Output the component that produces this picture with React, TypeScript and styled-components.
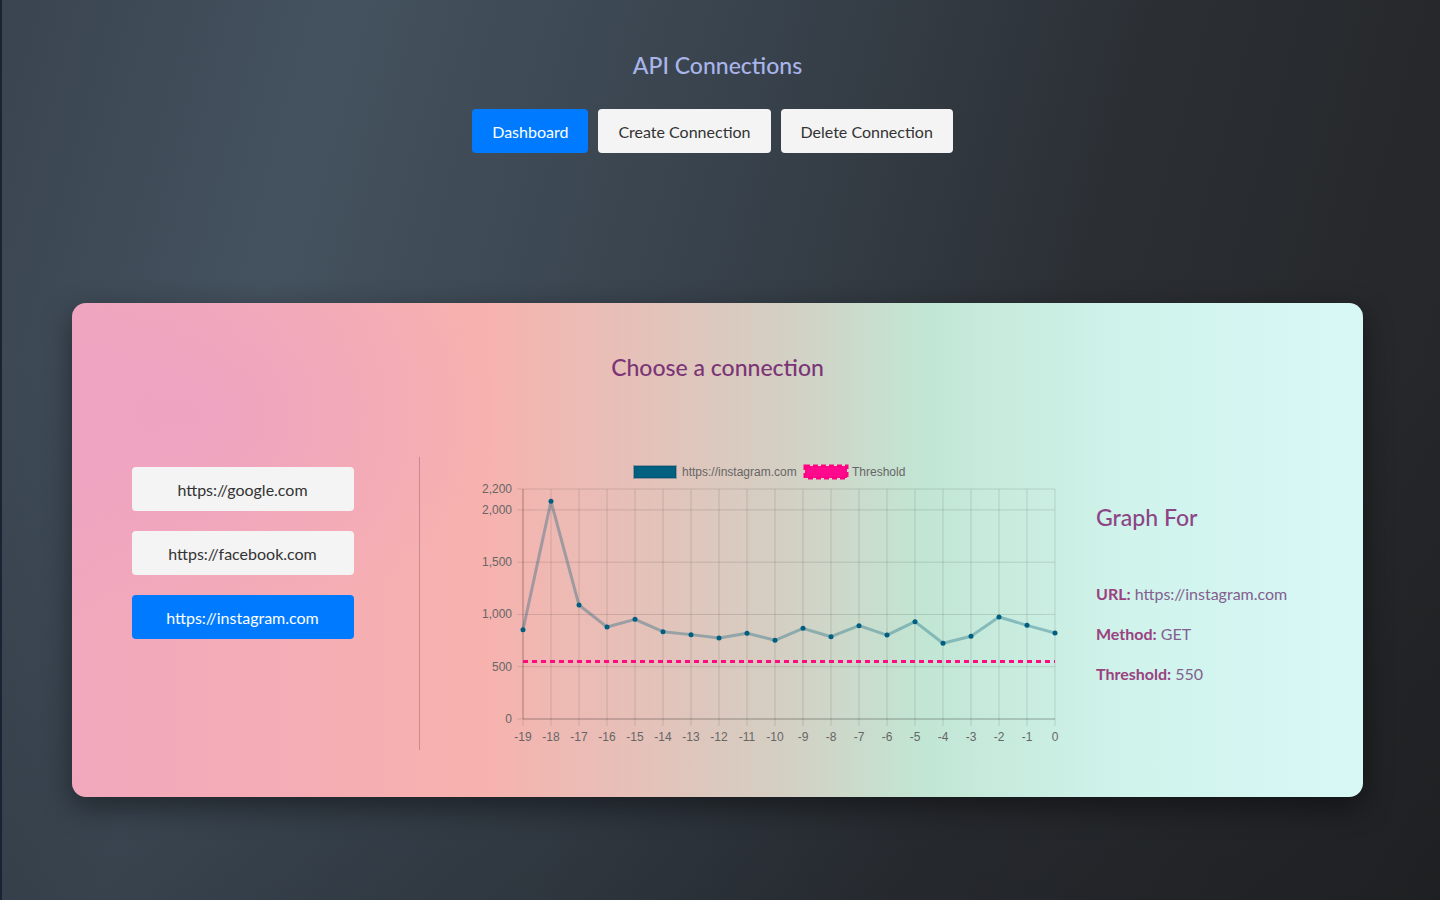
import styled, { createGlobalStyle } from 'styled-components';

const GlobalStyle = createGlobalStyle`
  html {
    overflow-y: scroll;
  }
  html::-webkit-scrollbar {
    width: 5px;
  }
  html::-webkit-scrollbar-track {
    background: #26282c;
  }
  html::-webkit-scrollbar-thumb {
    background: #e3a3a6;
  }
  body {
    margin: 0;
    font-family: Lato, "Open Sans", sans-serif;
    background: #26282b;
  }
`;

const Page = styled.div`
  min-height: 1006px;
  box-sizing: border-box;
  padding: 50px 77px 200px 70px;
  background:
    linear-gradient(180deg, rgba(0, 0, 0, 0) 35%, rgba(18, 20, 24, 0.3) 100%),
    linear-gradient(105deg, #3a4450 0%, #44525f 20%, #38424c 45%, #2b2f34 68%, #222324 100%);
  border-left: 2px solid #1b2233;
`;

const Title = styled.h1`
  margin: 0;
  text-align: center;
  font-size: 23px;
  line-height: 30px;
  font-weight: 500;
  color: #a9b5ea;
`;

const Nav = styled.nav`
  display: flex;
  justify-content: center;
  margin-top: 29px;
`;

const Button = styled.button<{ $active?: boolean }>`
  height: 44px;
  padding: 0 20px;
  border: none;
  border-radius: 4px;
  font-family: inherit;
  font-size: 16px;
  cursor: pointer;
  background: ${(p) => (p.$active ? '#007bff' : '#f4f4f4')};
  color: ${(p) => (p.$active ? '#ffffff' : '#333333')};
`;

const NavButton = styled(Button)`
  margin-right: 10px;
`;

const Card = styled.section`
  margin-top: 150px;
  padding: 49px 0 50px;
  border-radius: 14px;
  background:
    radial-gradient(ellipse 320px 220px at 110px 110px, rgba(234, 156, 200, 0.55), transparent),
    linear-gradient(90deg, #f1a8bd 0%, #f7b2ae 32%, #d4cfc3 55%, #c2e6d4 66%, #d0f3ec 82%, #d8f8f6 100%);
  box-shadow: 0 10px 30px rgba(0, 0, 0, 0.45);
`;

const CardTitle = styled.h2`
  margin: 0;
  text-align: center;
  font-size: 23px;
  line-height: 30px;
  font-weight: 500;
  color: #7b3577;
`;

const Row = styled.div`
  display: grid;
  grid-template-columns: 348px 676px 1fr;
  margin-top: 75px;
  height: 290px;
`;

const UrlList = styled.div`
  display: flex;
  flex-direction: column;
  align-items: center;
  gap: 20px;
  padding: 10px 6px 0 0;
  border-right: 1px solid rgba(120, 70, 80, 0.35);
`;

const UrlButton = styled(Button)`
  width: 222px;
`;

const ChartBox = styled.div`
  padding-left: 50px;
`;

const Info = styled.div`
  padding-top: 45px;
`;

const InfoTitle = styled.h3`
  margin: 0 0 51px;
  font-size: 23px;
  line-height: 30px;
  font-weight: 500;
  color: #8d4586;
`;

const InfoLine = styled.p`
  margin: 0 0 18px;
  font-size: 16px;
  line-height: 22px;
  color: #83608e;
  b {
    color: #9a417f;
    font-weight: 700;
  }
`;

const ChartText = styled.text`
  font-family: "Liberation Sans", Arial, sans-serif;
  font-size: 12px;
  fill: #666666;
`;

const values = [854, 2082, 1090, 880, 953, 835, 807, 775, 820, 753, 867, 787, 893, 803, 931, 724, 791, 976, 896, 822];

const X0 = 53;
const X1 = 585;
const Y0 = 262;
const Y1 = 32;
const MAX = 2200;
const xAt = (i: number) => X0 + ((X1 - X0) / 19) * i;
const yAt = (v: number) => Y0 - ((Y0 - Y1) * v) / MAX;

function Chart() {
  const yTicks = [0, 500, 1000, 1500, 2000, 2200];
  const line = values.map((v, i) => `${i === 0 ? 'M' : 'L'}${xAt(i)},${yAt(v)}`).join(' ');
  return (
    <svg width="600" height="290" viewBox="0 0 600 290">
      <rect x="164" y="9" width="42" height="12" fill="#006080" stroke="rgba(0,70,100,0.35)" strokeWidth="2" />
      <ChartText x="212" y="19">https://instagram.com</ChartText>
      <rect x="335" y="9" width="42" height="12" fill="#ff0a8c" stroke="#ff0080" strokeWidth="3" strokeDasharray="5 3" />
      <ChartText x="382" y="19">Threshold</ChartText>

      {yTicks.map((t) => (
        <g key={t}>
          <line x1={X0 - 6} x2={X1} y1={yAt(t)} y2={yAt(t)} stroke="rgba(0,0,0,0.12)" />
          <ChartText x={X0 - 11} y={yAt(t) + 4} textAnchor="end">
            {t.toLocaleString('en-US')}
          </ChartText>
        </g>
      ))}
      {values.map((_, i) => (
        <g key={i}>
          <line x1={xAt(i)} x2={xAt(i)} y1={Y1} y2={Y0 + 7} stroke="rgba(0,0,0,0.12)" />
          <ChartText x={xAt(i)} y={Y0 + 22} textAnchor="middle">
            {i - 19}
          </ChartText>
        </g>
      ))}
      <line x1={X0} x2={X1} y1={Y0} y2={Y0} stroke="rgba(0,0,0,0.22)" />
      <line x1={X0} x2={X0} y1={Y1} y2={Y0} stroke="rgba(0,0,0,0.22)" />

      <line x1={X0} x2={X1} y1={yAt(550)} y2={yAt(550)} stroke="#ff0a80" strokeWidth="3" strokeDasharray="5 4" />
      <path d={line} fill="none" stroke="rgba(0,90,120,0.33)" strokeWidth="3" strokeLinejoin="round" />
      {values.map((v, i) => (
        <circle key={i} cx={xAt(i)} cy={yAt(v)} r="2.5" fill="#005f80" />
      ))}
    </svg>
  );
}

export default function App() {
  return (
    <>
      <GlobalStyle />
      <Page>
        <Title>API Connections</Title>
        <Nav>
          <NavButton $active>Dashboard</NavButton>
          <NavButton>Create Connection</NavButton>
          <NavButton>Delete Connection</NavButton>
        </Nav>
        <Card>
          <CardTitle>Choose a connection</CardTitle>
          <Row>
            <UrlList>
              <UrlButton>https://google.com</UrlButton>
              <UrlButton>https://facebook.com</UrlButton>
              <UrlButton $active>https://instagram.com</UrlButton>
            </UrlList>
            <ChartBox>
              <Chart />
            </ChartBox>
            <Info>
              <InfoTitle>Graph For</InfoTitle>
              <InfoLine>
                <b>URL:</b> https://instagram.com
              </InfoLine>
              <InfoLine>
                <b>Method:</b> GET
              </InfoLine>
              <InfoLine>
                <b>Threshold:</b> 550
              </InfoLine>
            </Info>
          </Row>
        </Card>
      </Page>
    </>
  );
}
